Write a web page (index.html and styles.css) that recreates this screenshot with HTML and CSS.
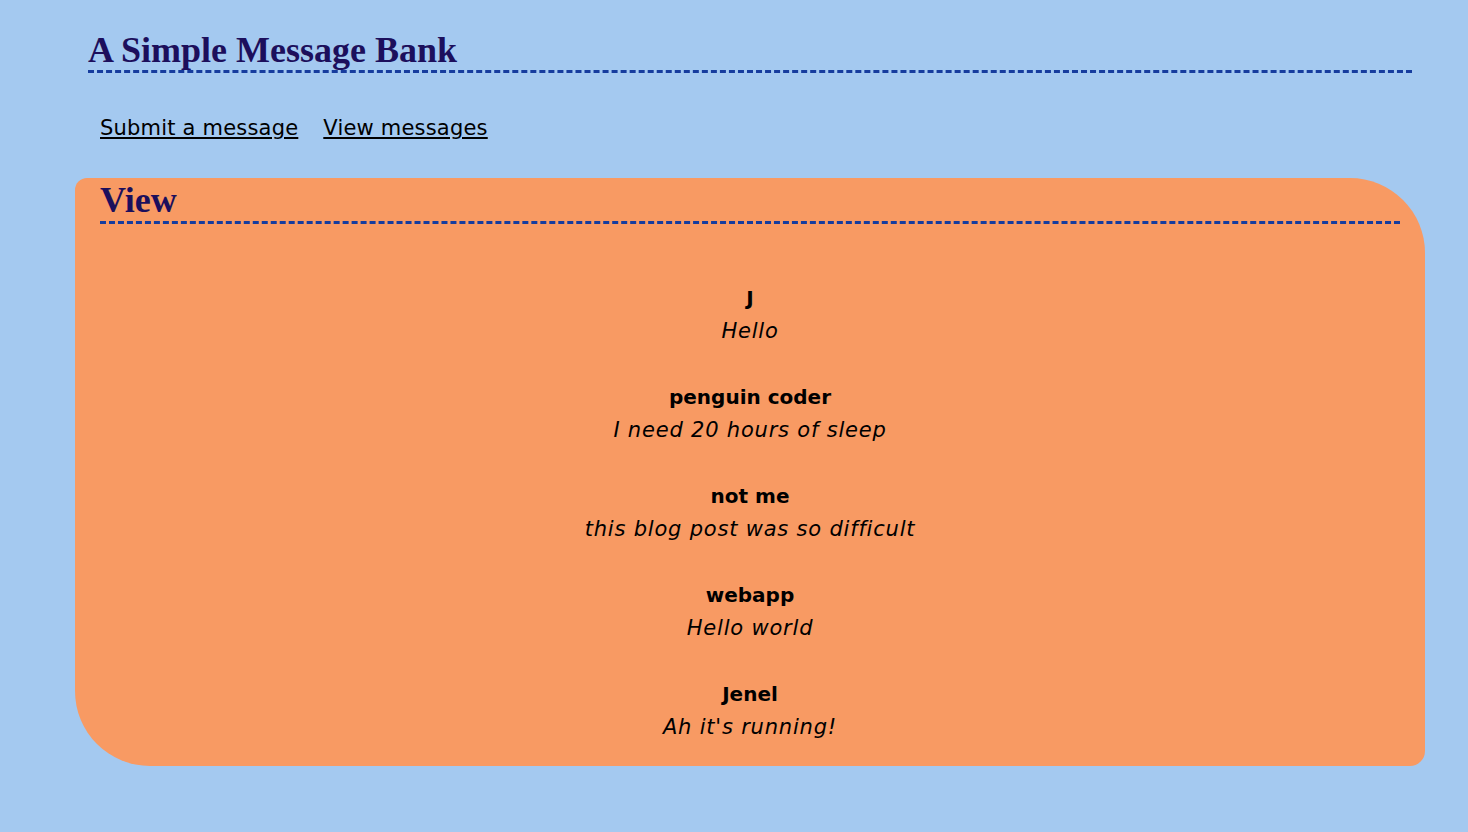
FILE: index.html
```html
<!DOCTYPE html>
<html lang="en">
<head>
<meta charset="utf-8">
<title>A Simple Message Bank</title>
<link rel="stylesheet" href="styles.css">
</head>
<body>
<div class="wrap">
  <header class="site-header">
    <h1 class="site-title">A Simple Message Bank</h1>
  </header>
  <nav class="nav">
    <a class="nav-link" href="#">Submit a message</a>
    <a class="nav-link" href="#">View messages</a>
  </nav>
  <section class="panel">
    <h2 class="panel-title">View</h2>
    <ul class="messages">
      <li class="message"><div class="msg-name">J</div><div class="msg-text">Hello</div></li>
      <li class="message"><div class="msg-name">penguin coder</div><div class="msg-text">I need 20 hours of sleep</div></li>
      <li class="message"><div class="msg-name">not me</div><div class="msg-text">this blog post was so difficult</div></li>
      <li class="message"><div class="msg-name">webapp</div><div class="msg-text">Hello world</div></li>
      <li class="message"><div class="msg-name">Jenel</div><div class="msg-text">Ah it's running!</div></li>
    </ul>
  </section>
</div>
</body>
</html>
```

FILE: styles.css
```css
html, body {
  margin: 0;
  padding: 0;
}
body {
  background: #a4c9f0;
  font-family: "Comic Sans MS", "DejaVu Sans", sans-serif;
  color: #000;
}
.wrap {
  width: 1350px;
  margin-left: 75px;
  padding-top: 30px;
}
.site-header {
  padding: 0 13px;
}
.site-title {
  margin: 0;
  font-family: "Liberation Serif", "Times New Roman", serif;
  font-size: 36px;
  font-weight: bold;
  color: #1c0f5c;
  line-height: 40px;
  border-bottom: 3px dashed #163c9e;
}
.nav {
  display: flex;
  gap: 25px;
  padding: 0 25px;
  margin-top: 39px;
  height: 66px;
}
.nav-link {
  color: #000;
  font-size: 21px;
  letter-spacing: 0.2px;
  line-height: 33px;
  text-decoration: underline;
}
.panel {
  background: #f89a63;
  border-radius: 12px 75px 15px 75px;
  padding: 0 25px 22px;
}
.panel-title {
  margin: 0;
  padding-top: 1px;
  font-family: "Liberation Serif", "Times New Roman", serif;
  font-size: 36px;
  font-weight: bold;
  color: #1c0f5c;
  line-height: 42px;
  border-bottom: 3px dashed #163c9e;
}
.messages {
  list-style: none;
  margin: 58px 0 0;
  padding: 0;
  display: flex;
  flex-direction: column;
  gap: 33px;
  text-align: center;
}
.message {
  font-size: 21px;
  line-height: 33px;
}
.msg-name {
  font-weight: bold;
  font-size: 20px;
}
.msg-text {
  font-style: italic;
  letter-spacing: 0.8px;
}
```
